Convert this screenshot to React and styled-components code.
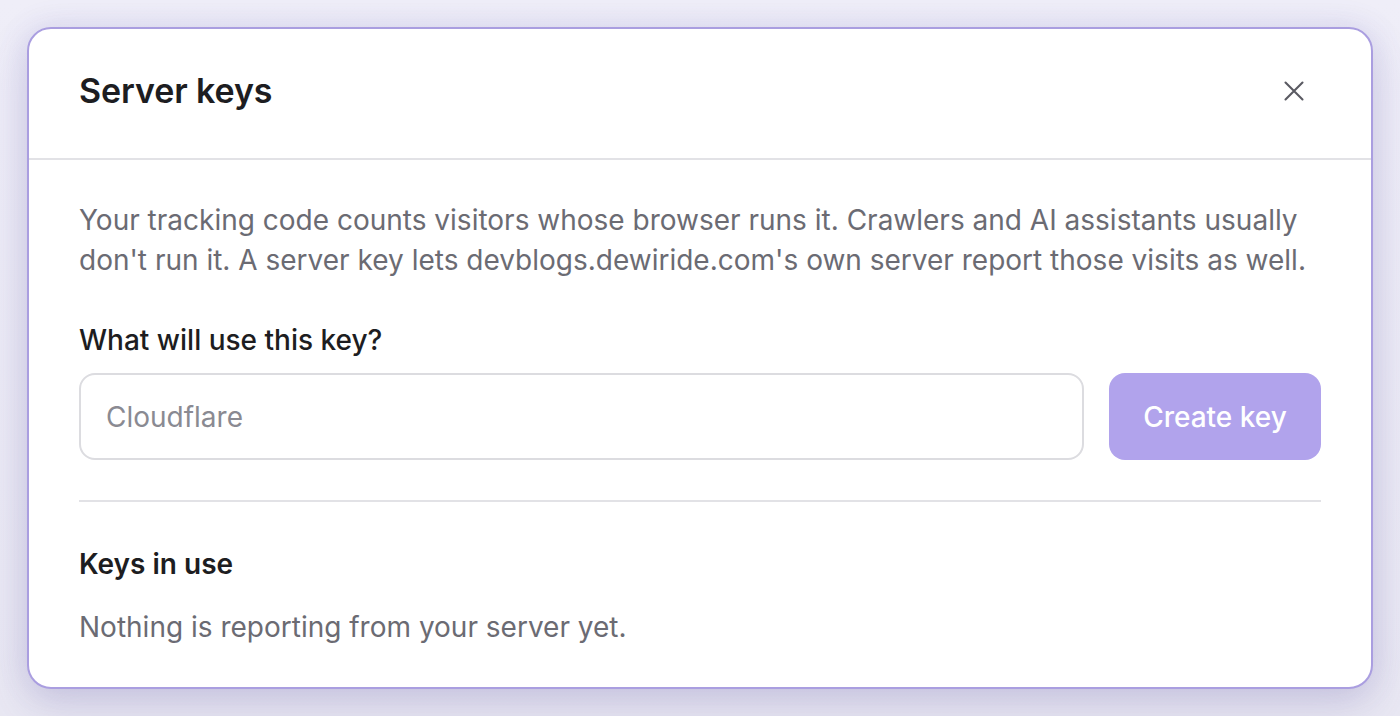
import styled, { createGlobalStyle } from 'styled-components';

const GlobalStyle = createGlobalStyle`
  html, body {
    margin: 0;
    padding: 0;
    height: 100%;
  }
  body {
    background: #ecebf5;
    font-family: Inter, 'Noto Sans', sans-serif;
    -webkit-font-smoothing: antialiased;
  }
`;

const Page = styled.div`
  box-sizing: border-box;
  height: 716px;
  padding: 27px;
  display: flex;
  background: linear-gradient(180deg, #efeef8 0%, #e9e8f3 100%);
`;

const Modal = styled.section`
  box-sizing: border-box;
  flex: 1;
  display: flex;
  flex-direction: column;
  background: #fff;
  border: 2px solid #aa9ee0;
  border-radius: 24px;
  box-shadow: 0 18px 44px rgba(90, 80, 150, 0.18), 0 0 30px rgba(120, 110, 200, 0.16);
  overflow: hidden;
`;

const Header = styled.header`
  display: flex;
  align-items: center;
  justify-content: space-between;
  box-sizing: border-box;
  height: 131px;
  padding: 0 55px 6px 50px;
  border-bottom: 2px solid #e2e2e6;
`;

const Title = styled.h2`
  margin: 0;
  font-size: 34px;
  font-weight: 600;
  letter-spacing: -0.1px;
  color: #1d1d21;
`;

const CloseButton = styled.button`
  display: flex;
  align-items: center;
  justify-content: center;
  width: 44px;
  height: 44px;
  padding: 0;
  border: none;
  background: none;
  color: #5a5a62;
  cursor: pointer;
`;

const Body = styled.div`
  display: flex;
  flex-direction: column;
  padding: 40px 50px 0;
`;

const Text = styled.p`
  margin: 0;
  font-size: 28px;
  line-height: 40px;
  color: ${p => (p.$muted ? '#6b6b73' : '#1d1d21')};
  font-weight: ${p => p.$weight || 400};
`;

const Label = styled.label`
  margin-top: 40px;
  font-size: 28px;
  line-height: 40px;
  font-weight: 500;
  color: #1d1d21;
`;

const Row = styled.div`
  display: flex;
  gap: 25px;
  margin-top: 13px;
`;

const Input = styled.input`
  box-sizing: border-box;
  flex: 1;
  height: 87px;
  padding: 0 25px;
  border: 2px solid #dcdce0;
  border-radius: 16px;
  font-family: inherit;
  font-size: 28px;
  color: #1d1d21;
  outline: none;

  &::placeholder {
    color: #8a8a92;
  }
`;

const Button = styled.button`
  box-sizing: border-box;
  width: 212px;
  height: 87px;
  border: none;
  border-radius: 16px;
  background: #b1a3ec;
  color: #fff;
  font-family: inherit;
  font-size: 28px;
  font-weight: 500;
  cursor: default;
`;

const Divider = styled.hr`
  margin: 40px 0 42px;
  border: none;
  border-top: 2px solid #e2e2e6;
`;

const SubTitle = styled(Text)`
  margin-bottom: 23px;
`;

export default function App() {
  return (
    <>
      <GlobalStyle />
      <Page>
        <Modal>
          <Header>
            <Title>Server keys</Title>
            <CloseButton aria-label="Close">
              <svg width="20" height="20" viewBox="0 0 20 20" fill="none">
                <path
                  d="M1.5 1.5L18.5 18.5M18.5 1.5L1.5 18.5"
                  stroke="currentColor"
                  strokeWidth="2.1"
                  strokeLinecap="round"
                />
              </svg>
            </CloseButton>
          </Header>
          <Body>
            <Text $muted>
              Your tracking code counts visitors whose browser runs it. Crawlers and AI assistants usually
              don't run it. A server key lets devblogs.dewiride.com's own server report those visits as well.
            </Text>
            <Label htmlFor="key-name">What will use this key?</Label>
            <Row>
              <Input id="key-name" placeholder="Cloudflare" />
              <Button>Create key</Button>
            </Row>
            <Divider />
            <SubTitle $weight={600}>Keys in use</SubTitle>
            <Text $muted>Nothing is reporting from your server yet.</Text>
          </Body>
        </Modal>
      </Page>
    </>
  );
}
